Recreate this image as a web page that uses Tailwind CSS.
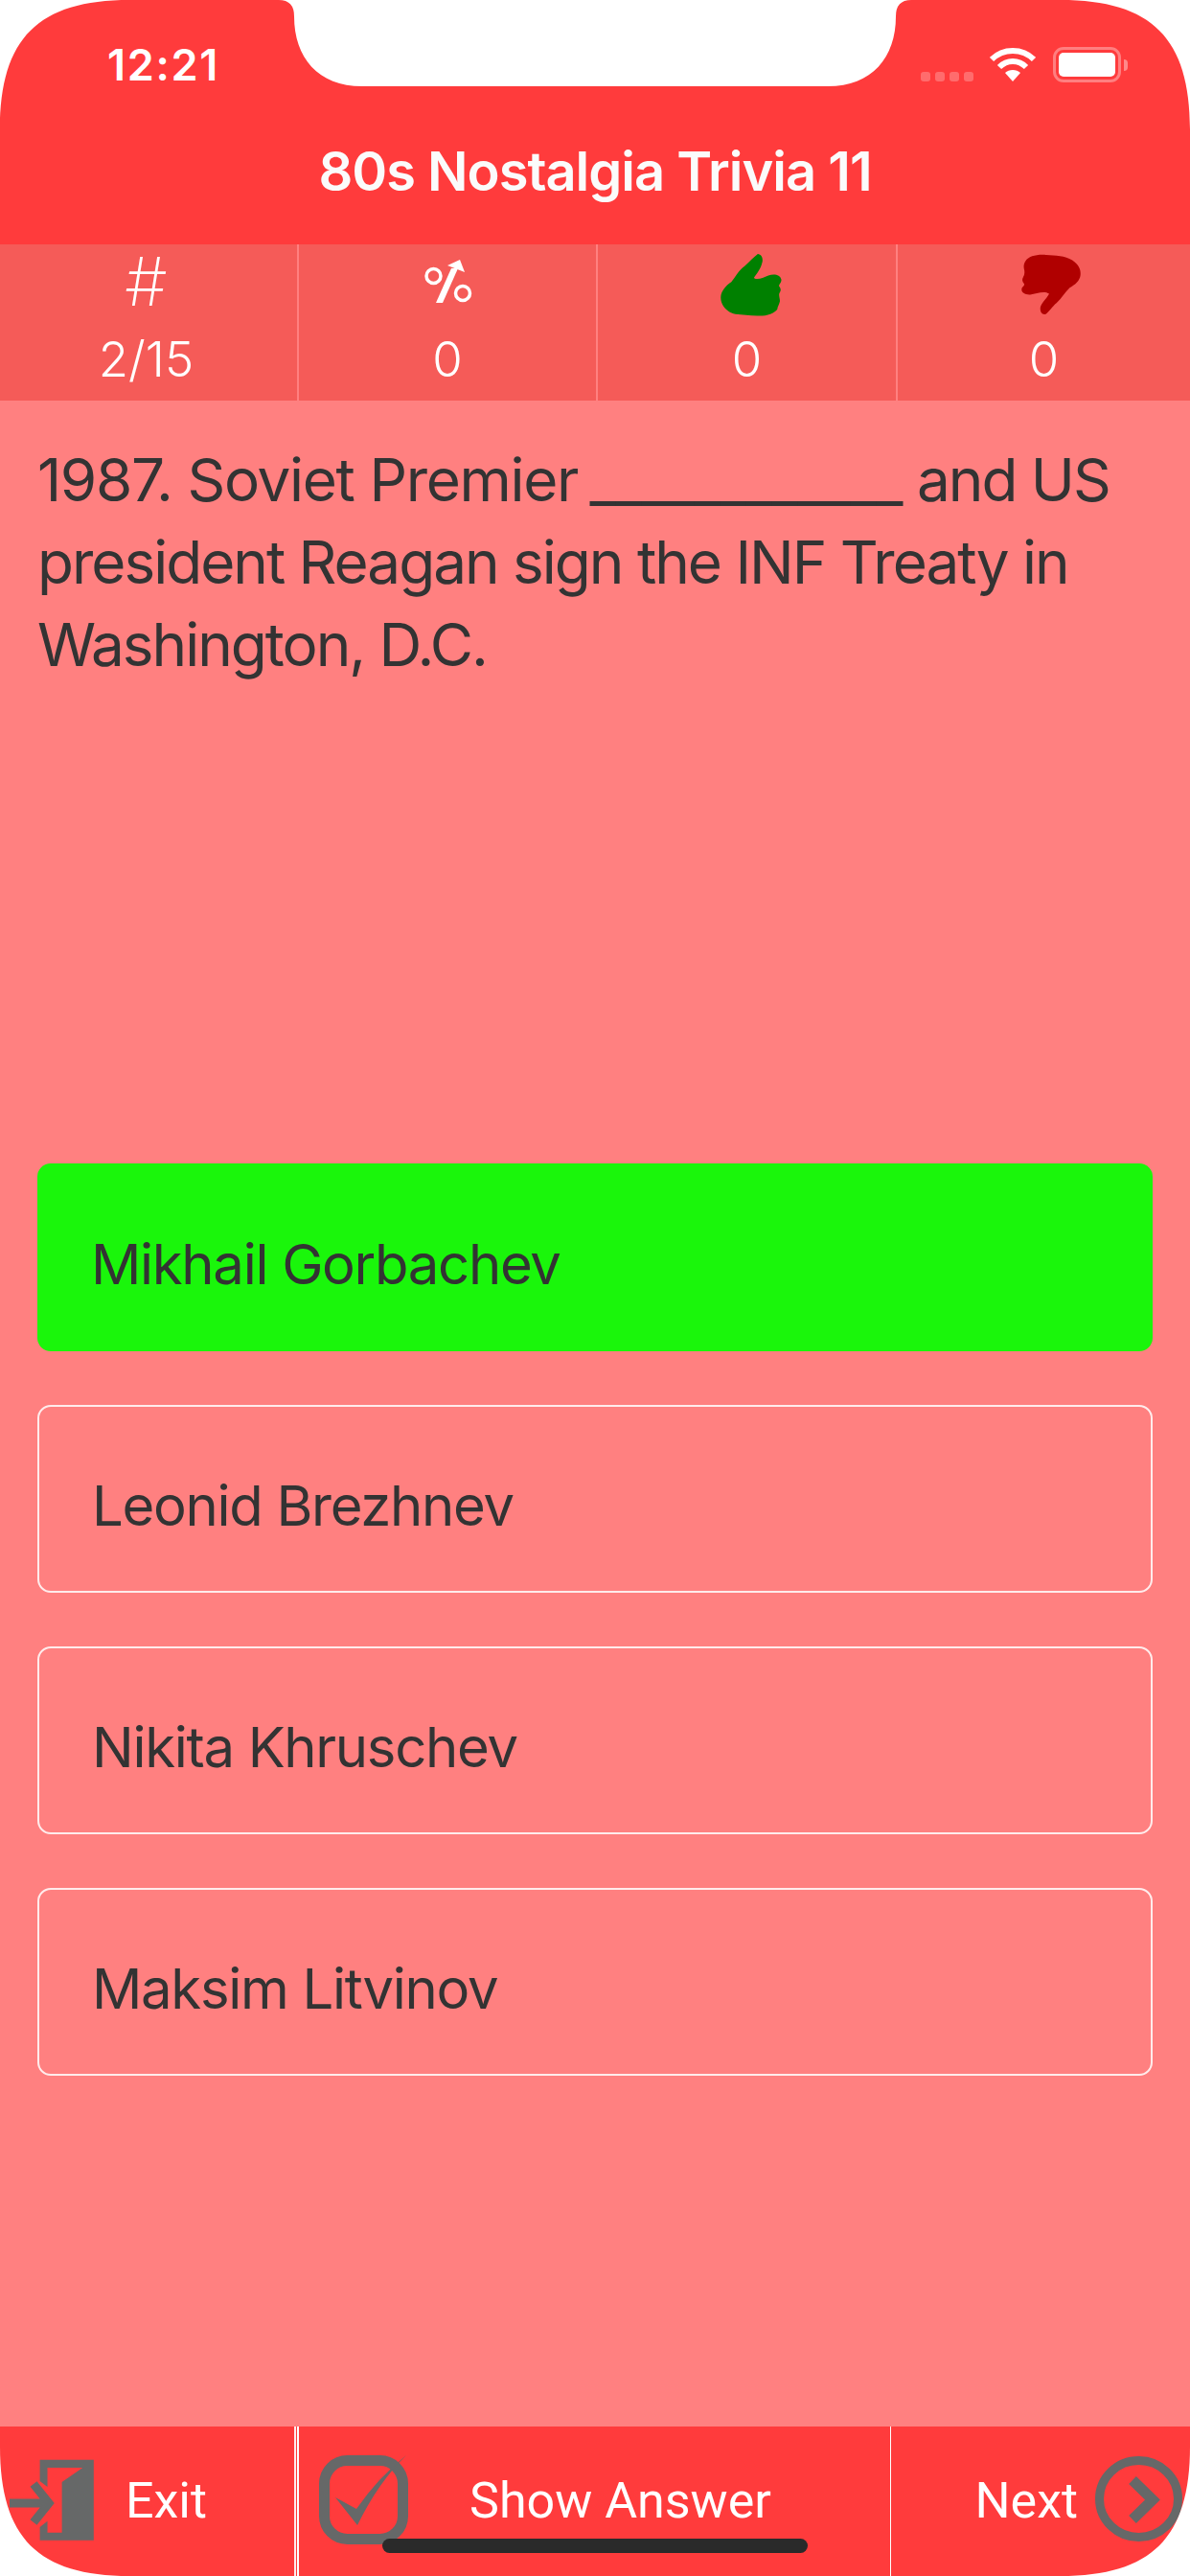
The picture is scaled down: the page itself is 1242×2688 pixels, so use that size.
<!DOCTYPE html>
<html lang="en">
<head>
    <meta charset="UTF-8">
    <meta name="viewport" content="width=device-width, initial-scale=1.0">
    <title>80s Nostalgia Trivia 11</title>
    <script src="https://cdn.jsdelivr.net/npm/@tailwindcss/browser@4"></script>
</head>
<body class="bg-white font-['Inter',sans-serif]">
    <div class="relative w-[1242px] h-[2688px] flex flex-col overflow-hidden bg-[#ff8080]">
        <!-- screen corners and notch -->
        <svg class="absolute left-0 top-0" width="1242" height="2688" viewBox="0 0 1242 2688" fill="#fff">
            <path d="M291 0Q307 0 307 17C307 60 332 90 378 90H864C910 90 935 60 935 17Q935 0 951 0Z"/>
            <path d="M0 0H135C40 0 0 40 0 135Z"/>
            <path d="M1242 0H1107C1202 0 1242 40 1242 135Z"/>
            <path d="M0 2688H135C40 2688 0 2648 0 2553Z"/>
            <path d="M1242 2688H1107C1202 2688 1242 2648 1242 2553Z"/>
        </svg>

        <!-- header -->
        <header class="h-[255px] shrink-0 flex flex-col bg-[#ff3b3c] text-white">
            <div class="h-[144px] flex items-start justify-between pt-[44px] pl-[112px] pr-[65px]">
                <span class="text-[45px] leading-[48px] font-semibold tracking-[1.7px]">12:21</span>
                <div class="flex items-start pt-[5px]">
                    <div class="flex gap-[5px] mt-[26px]">
                        <span class="w-[10px] h-[10px] rounded-[3px] bg-white/25"></span>
                        <span class="w-[10px] h-[10px] rounded-[3px] bg-white/25"></span>
                        <span class="w-[10px] h-[10px] rounded-[3px] bg-white/25"></span>
                        <span class="w-[10px] h-[10px] rounded-[3px] bg-white/25"></span>
                    </div>
                    <svg class="ml-[17px]" width="48" height="36" viewBox="0 0 48 36" fill="none" stroke="#fff" stroke-width="6">
                        <path d="M2 13C14 1 34 1 46 13"/>
                        <path d="M10 21C18 13 30 13 38 21"/>
                        <path fill="#fff" stroke="none" d="M24 36L16 27C20 23 28 23 32 27Z"/>
                    </svg>
                    <div class="ml-[18px] w-[71px] h-[37px] rounded-[11px] border-[3px] border-white/35 p-[3px]">
                        <div class="w-full h-full rounded-[5px] bg-white"></div>
                    </div>
                    <div class="ml-[3px] mt-[13px] w-[4px] h-[12px] rounded-r-full bg-white/40"></div>
                </div>
            </div>
            <h1 class="text-center text-[56px] leading-[70px] font-semibold tracking-[-1px] text-[#fbfbfb]">80s Nostalgia Trivia 11</h1>
        </header>

        <!-- stats -->
        <div class="h-[163px] shrink-0 grid grid-cols-[312px_312px_313px_1fr] bg-[#f55b58] text-white text-[51px] font-light">
            <div class="flex flex-col items-center pr-[5px] border-r-2 border-[#ff8080]">
                <span class="h-[90px] pt-[4px] text-[70px] leading-[70px] font-extralight">#</span>
                <span class="leading-[60px]">2/15</span>
            </div>
            <div class="flex flex-col items-center border-r-2 border-[#ff8080]">
                <svg class="mt-[13px] h-[77px]" width="52" height="77" viewBox="0 0 52 77" fill="#fff" stroke="none">
                    <circle cx="11.5" cy="20" r="7.5" fill="none" stroke="#fff" stroke-width="3.5"/>
                    <circle cx="42" cy="38" r="7.5" fill="none" stroke="#fff" stroke-width="3.5"/>
                    <path d="M14 48L30 12L37 12L21 48Z"/>
                    <path d="M39 3L26 9L44 16Z"/>
                </svg>
                <span class="leading-[60px]">0</span>
            </div>
            <div class="flex flex-col items-center border-r-2 border-[#ff8080]">
                <svg class="mt-[9px] mb-[12px] ml-[8px] h-[69px]" width="68" height="69" viewBox="212 72 196 200">
                    <path fill="#008000" d="M330 75C342 76 347 90 343 102C339 120 327 135 318 147C330 156 345 146 362 140C380 134 398 138 401 152C403 162 394 166 394 172C400 178 401 186 396 192C392 198 397 208 397 218C395 228 390 234 389 242C380 254 360 262 335 262C310 263 285 258 262 257C235 250 218 230 218 206C219 188 232 172 250 160C262 145 272 125 290 112C305 98 318 84 330 75Z"/>
                </svg>
                <span class="leading-[60px]">0</span>
            </div>
            <div class="flex flex-col items-center">
                <svg class="mt-[9px] mb-[15px] ml-[15px] h-[66px]" width="64" height="66" viewBox="1154 72 194 200">
                    <path fill="#b00000" d="M1170 98C1180 82 1205 76 1235 78C1265 80 1295 80 1318 95C1338 108 1346 125 1344 142C1342 160 1328 172 1310 182C1295 196 1285 215 1268 230C1255 240 1245 258 1233 266C1222 268 1216 258 1217 245C1220 230 1236 218 1245 201C1230 190 1205 200 1185 204C1170 205 1156 198 1158 186C1160 178 1168 176 1166 170C1160 162 1158 156 1163 148C1168 140 1168 130 1165 120C1164 110 1166 104 1170 98Z"/>
                </svg>
                <span class="leading-[60px]">0</span>
            </div>
        </div>

        <!-- question and answers -->
        <main class="flex-1 flex flex-col px-[39px] text-[#333]">
            <div class="h-[796px] pt-[40px]">
                <p class="text-[62px] leading-[86px] font-normal tracking-[-2px]"><span class="tracking-[-1.35px]">1987. Soviet Premier</span> <span class="-ml-[3px] tracking-[-1.1px]">____________</span> and US<br>president Reagan sign the INF Treaty in<br>Washington, D.C.</p>
            </div>
            <div class="flex flex-col gap-[56px] text-[58px] font-normal tracking-[-1.3px]">
                <div class="h-[196px] flex items-center pt-[14px] pl-[56px] rounded-[14px] bg-[#1af60b]">Mikhail Gorbachev</div>
                <div class="h-[196px] flex items-center pt-[14px] pl-[55px] rounded-[14px] border-2 border-white/85">Leonid Brezhnev</div>
                <div class="h-[196px] flex items-center pt-[14px] pl-[55px] rounded-[14px] border-2 border-white/85">Nikita Khruschev</div>
                <div class="h-[196px] flex items-center pt-[14px] pl-[55px] rounded-[14px] border-2 border-white/85">Maksim Litvinov</div>
            </div>
        </main>

        <!-- toolbar -->
        <footer class="h-[156px] shrink-0 flex bg-[#ff3b3c] text-white text-[52px] font-normal font-['Roboto',sans-serif]">
            <div class="w-[309px] shrink-0 flex items-center pl-[10px] border-r-2 border-white/90">
                <svg width="88" height="96" viewBox="10 0 88 96" class="-mt-[4px]">
                    <path fill="#666868" d="M41.6 6.7H97.8V90.7H41.6V77L49.5 70.7V82.7H64.6V30L86.3 15H49.5V35L41.6 29Z"/>
                    <path fill="none" stroke="#666868" stroke-width="9" d="M10 52H48M35 32L51 52L35 72"/>
                </svg>
                <span class="ml-[33px]">Exit</span>
            </div>
            <div class="w-px shrink-0"></div>
            <div class="flex-1 flex items-center pl-[21px] border-l-2 border-r border-white">
                <svg width="93" height="96" viewBox="0 0 93 96" class="-mt-[4px]">
                    <rect x="5.5" y="7.5" width="82" height="82" rx="24" fill="none" stroke="#666868" stroke-width="11"/>
                    <path fill="#666868" d="M17 46L39 58Q62 25 91 2Q62 30 40 75Z"/>
                </svg>
                <span class="ml-[64px]">Show Answer</span>
            </div>
            <div class="w-[312px] shrink-0 flex items-center justify-end pr-[8px]">
                <span>Next</span>
                <svg width="91" height="96" viewBox="0 0 91 96" class="ml-[18px] -mt-[4px]" fill="none" stroke="#666868">
                    <ellipse cx="45.5" cy="47.5" rx="41" ry="40" stroke-width="9"/>
                    <path d="M39 28L60 48.5L39 69" stroke-width="11"/>
                </svg>
            </div>
        </footer>

        <!-- home indicator -->
        <div class="absolute left-[399px] top-[2649px] w-[444px] h-[15px] rounded-full bg-[#2a2a2a]"></div>
    </div>
</body>
</html>
